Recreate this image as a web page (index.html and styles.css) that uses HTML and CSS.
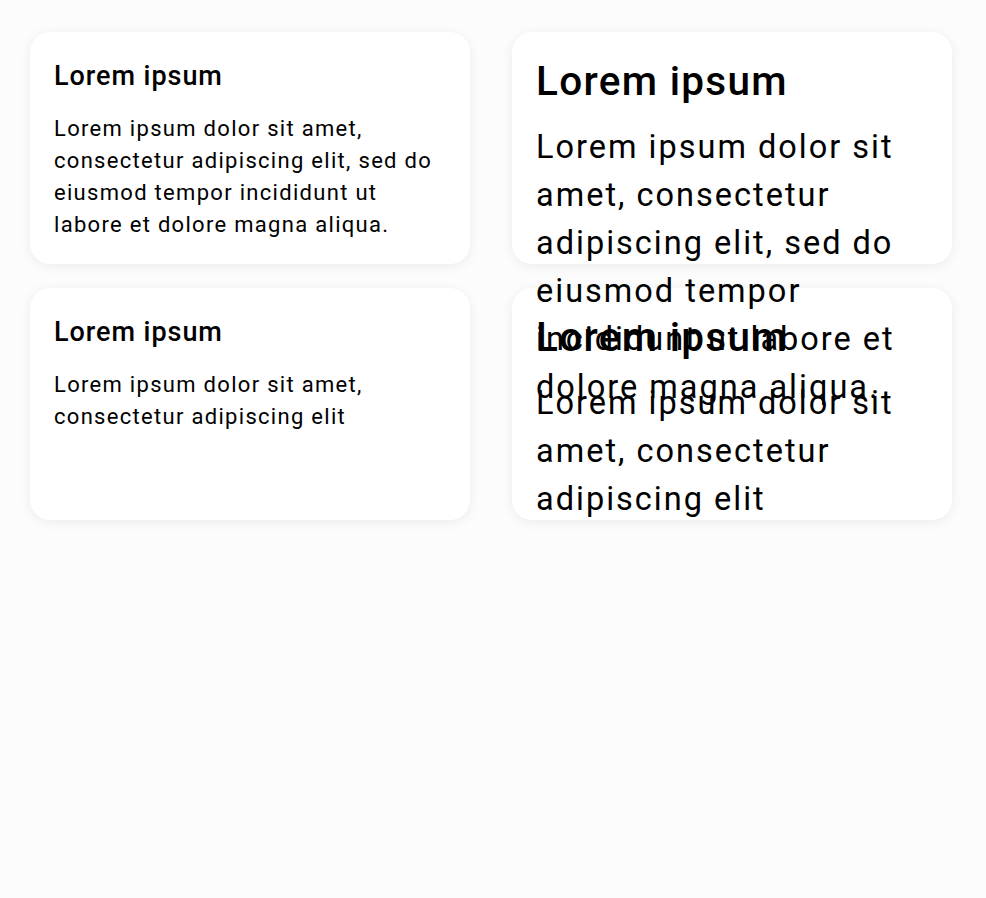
FILE: index.html
```html
<!DOCTYPE html>
<html>
<head>
<meta charset="utf-8">
<link rel="stylesheet" href="styles.css">
</head>
<body>
<div class="grid">
  <div class="card">
    <h2 class="title">Lorem ipsum</h2>
    <p class="body">Lorem ipsum dolor sit amet, consectetur adipiscing elit, sed do eiusmod tempor incididunt ut labore et dolore magna aliqua.</p>
  </div>
  <div class="card card-large">
    <h2 class="title">Lorem ipsum</h2>
    <p class="body">Lorem ipsum dolor sit amet, consectetur adipiscing elit, sed do eiusmod tempor incididunt ut labore et dolore magna aliqua.</p>
  </div>
  <div class="card">
    <h2 class="title">Lorem ipsum</h2>
    <p class="body">Lorem ipsum dolor sit amet, consectetur adipiscing elit</p>
  </div>
  <div class="card card-large">
    <h2 class="title">Lorem ipsum</h2>
    <p class="body">Lorem ipsum dolor sit amet, consectetur adipiscing elit</p>
  </div>
</div>
</body>
</html>
```
FILE: styles.css
```css
html, body {
  margin: 0;
  padding: 0;
  background: #fcfcfc;
  font-family: Roboto, "Noto Sans", sans-serif;
  color: #000;
}
.grid {
  display: grid;
  grid-template-columns: 440px 440px;
  grid-auto-rows: 232px;
  column-gap: 42px;
  row-gap: 24px;
  padding: 32px 30px;
}
.card {
  background: #fff;
  border-radius: 20px;
  box-shadow: 0 2px 12px rgba(0,0,0,0.07);
  padding: 24px 24px;
  box-sizing: border-box;
  overflow: visible;
}
/* text layers above all card backgrounds so overflowing text stays visible */
.title,
.body {
  position: relative;
}
.title {
  margin: 0;
  font-size: 27px;
  font-weight: 500;
  line-height: 40px;
  letter-spacing: 0.95px;
}
.body {
  margin: 17px 0 0;
  font-size: 22px;
  font-weight: 400;
  line-height: 32px;
  letter-spacing: 1.3px;
}
.card-large .title {
  font-size: 40.5px;
  line-height: 50px;
  letter-spacing: 1.3px;
}
.card-large .body {
  font-size: 32.5px;
  line-height: 48px;
  letter-spacing: 2px;
  margin-top: 17px;
}
```
